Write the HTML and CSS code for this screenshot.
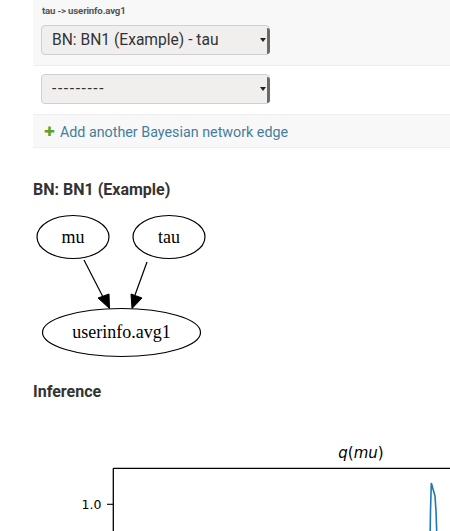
FILE: index.html
```html
<!DOCTYPE html>
<html>
<head>
<meta charset="utf-8">
<link rel="stylesheet" href="styles.css">
</head>
<body>
<div class="page">
  <div class="inline">
    <div class="row row-grey">
      <p class="original">tau -&gt; userinfo.avg1</p>
      <span class="select-wrap"><select class="select"><option>BN: BN1 (Example) - tau</option></select></span>
    </div>
    <div class="row row-white">
      <span class="select-wrap"><select class="select select-empty"><option>---------</option></select></span>
    </div>
    <div class="row row-add">
      <a class="add-link" href="#"><span class="plus">✚</span>Add another Bayesian network edge</a>
    </div>
  </div>

  <h2 class="heading bn-heading">BN: BN1 (Example)</h2>
  <svg class="graph" width="220" height="160" viewBox="0 0 220 160">
    <ellipse cx="41" cy="27" rx="36" ry="21.5" fill="none" stroke="#000" stroke-width="1.2"/>
    <text x="41" y="32.5" class="node-text" text-anchor="middle">mu</text>
    <ellipse cx="137" cy="27" rx="36" ry="21.5" fill="none" stroke="#000" stroke-width="1.2"/>
    <text x="137" y="32.5" class="node-text" text-anchor="middle">tau</text>
    <ellipse cx="89.5" cy="122.5" rx="79" ry="24" fill="none" stroke="#000" stroke-width="1.2"/>
    <text x="89.5" y="128" class="node-text" text-anchor="middle">userinfo.avg1</text>
    <line x1="52" y1="50" x2="71" y2="87" stroke="#000" stroke-width="1.2"/>
    <polygon points="66,88 77,84 77.5,98.5" fill="#000" stroke="#000"/>
    <line x1="115" y1="52" x2="103" y2="85" stroke="#000" stroke-width="1.2"/>
    <polygon points="99,84 110,88 100,98.5" fill="#000" stroke="#000"/>
  </svg>

  <h2 class="heading inf-heading">Inference</h2>
  <div class="plot">
    <svg class="plot-svg" width="420" height="110" viewBox="0 0 420 110">
      <text x="328" y="27" class="plot-title" text-anchor="middle"><tspan font-style="italic">q</tspan>(<tspan font-style="italic">mu</tspan>)</text>
      <line x1="80.3" y1="37.3" x2="420" y2="37.3" stroke="#000" stroke-width="1.3"/>
      <line x1="80.3" y1="37.3" x2="80.3" y2="110" stroke="#000" stroke-width="1.3"/>
      <line x1="74" y1="73.3" x2="80.3" y2="73.3" stroke="#000" stroke-width="1.1"/>
      <text x="68.5" y="78" class="tick" text-anchor="end">1.0</text>
      <polyline points="397,110 397.5,80 398.3,52 400,58 402,65 403,80 404,110" fill="none" stroke="#1f77b4" stroke-width="1.6"/>
    </svg>
  </div>
</div>
</body>
</html>
```
FILE: styles.css
```css
html, body {
  margin: 0;
  padding: 0;
  background: #fff;
  overflow: hidden;
}
body {
  font-family: Roboto, "Liberation Sans", Arial, sans-serif;
  color: #333;
}
.page {
  padding-left: 33px;
}
.inline {
  display: flex;
  flex-direction: column;
}
.row {
  padding: 0 8px;
  border-bottom: 1px solid #eee;
  box-sizing: border-box;
}
.row-grey {
  background: #f8f8f8;
  height: 66px;
  padding-top: 6px;
}
.original {
  margin: 0 0 0 1px;
  font-size: 9.7px;
  font-weight: bold;
  color: #555;
  line-height: 10px;
  letter-spacing: -0.2px;
}
.row-white {
  height: 49px;
  padding-top: 8px;
}
.row-add {
  background: #f8f8f8;
  height: 33px;
  display: flex;
  align-items: center;
  padding-left: 11px;
  padding-top: 1px;
}
.select-wrap {
  position: relative;
  display: inline-block;
  margin-top: 9px;
}
.row-white .select-wrap {
  margin-top: 0;
}
.select {
  -webkit-appearance: none;
  appearance: none;
  width: 229px;
  height: 30px;
  border: 1px solid #cfcfcf;
  border-radius: 4px;
  background: #f0efee;
  font-family: Roboto, "Liberation Sans", Arial, sans-serif;
  font-size: 15.6px;
  color: #333;
  padding: 0 0 0 10px;
  margin: 0;
  display: block;
}
.select-empty {
  letter-spacing: 1.6px;
}
.select-wrap::after {
  content: "";
  position: absolute;
  right: 0;
  top: 3px;
  bottom: 1px;
  width: 3px;
  background: #6a6a6a;
  border-radius: 0 3px 3px 0;
  pointer-events: none;
}
.select-wrap::before {
  content: "";
  position: absolute;
  right: 4px;
  top: 13px;
  border-left: 3px solid transparent;
  border-right: 3px solid transparent;
  border-top: 4px solid #222;
  pointer-events: none;
}
.add-link {
  color: #447e9b;
  text-decoration: none;
  font-size: 14.3px;
  display: flex;
  align-items: center;
}
.plus {
  color: #5fa225;
  font-size: 13px;
  margin-right: 5px;
  font-family: "DejaVu Sans", sans-serif;
}
.heading {
  margin: 0;
  font-size: 16px;
  line-height: 19px;
  font-weight: bold;
  color: #333;
}
.bn-heading {
  margin-top: 32px;
}
.graph {
  display: block;
  margin-top: 11px;
  margin-left: -1px;
}
.node-text {
  font-family: "Liberation Serif", "Times New Roman", serif;
  font-size: 18px;
  fill: #000;
}
.inf-heading {
  margin-top: 12px;
}
.plot {
  margin-top: 30px;
  width: 420px;
}
.plot-svg {
  display: block;
}
.plot-title {
  font-family: "DejaVu Sans", sans-serif;
  font-size: 15px;
  fill: #000;
}
.tick {
  font-family: "DejaVu Sans", sans-serif;
  font-size: 12.5px;
  fill: #000;
}
```
